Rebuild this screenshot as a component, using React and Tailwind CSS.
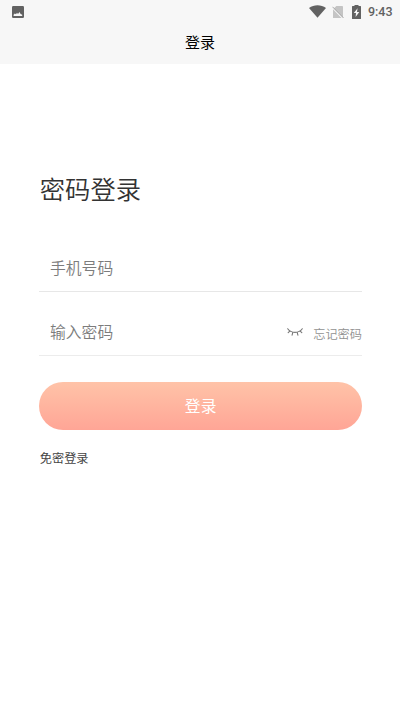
function StatusBar() {
  return (
    <div className="flex h-6 items-center pl-3 pr-[7.5px] text-[#626262]">
      <svg className="h-3 w-3" viewBox="0 0 12 12">
        <rect width="12" height="12" rx="1.2" fill="currentColor" />
        <path d="M1.6 10V8.8L2.8 7.6L4 8.2L5 6.8L6 8L7.5 6L8.6 8L10.2 8.8V10Z" fill="#f7f7f7" />
      </svg>
      <div className="ml-auto flex items-center">
        <svg className="mb-px h-[13px] w-[17px]" viewBox="0 0 17 13">
          <path d="M0 3C5 -.8 12 -.8 17 3L8.5 12.8Z" fill="currentColor" />
        </svg>
        <svg className="ml-1.5 h-3 w-3" viewBox="0 0 12 12">
          <path d="M4.3 0H10.2Q11 0 11 .8V12H1V3.3Z" fill="#c4c4c4" />
          <path d="M.3 1.8L10.7 12.4" stroke="#f7f7f7" strokeWidth="1.2" />
          <path d="M.5 .8L11.5 11.9" stroke="#aaa" strokeWidth="1" />
        </svg>
        <svg className="mb-px ml-2 h-3.5 w-[9px]" viewBox="0 0 9 14">
          <path d="M2.5 0H6.5V1H8.4Q9 1 9 1.6V13.4Q9 14 8.4 14H.6Q0 14 0 13.4V1.6Q0 1 .6 1H2.5Z" fill="currentColor" />
          <path d="M5.6 3.2L1.8 8H4L3.6 12L7.3 6.9H5Z" fill="#f7f7f7" />
        </svg>
        <span className="ml-[7px] font-[Roboto,sans-serif] text-[12.5px] font-medium leading-6">9:43</span>
      </div>
    </div>
  );
}

function ClosedEye() {
  return (
    <svg className="mt-0.5 h-2 w-4" viewBox="0 0 16 8" fill="none" stroke="#777" strokeWidth="1.1" strokeLinecap="round">
      <path d="M.7 .8C4.2 5.6 11.8 5.6 15.3 .8M2.8 3.1L1.2 4.7M5.8 4.4L5.1 7.1M10.2 4.4L10.9 7.1M13.2 3.1L14.8 4.7" />
    </svg>
  );
}

export default function App() {
  return (
    <div className="h-[711px] w-[400px] overflow-hidden bg-white font-['Noto_Sans_CJK_SC',sans-serif]">
      <header className="h-16 bg-[#f7f7f7]">
        <StatusBar />
        <h1 className="h-10 text-center text-[15px] leading-[35px] text-black">登录</h1>
      </header>
      <main className="pl-[39.3px] pr-[38px] pt-[104px]">
        <h2 className="h-10 pl-[.5px] text-[25.3px] font-[350] leading-[41px] text-[#333]">密码登录</h2>
        <div className="mt-9 flex h-12 items-center border-b border-[#e7e7e7] pl-[10.7px]">
          <span className="text-[15.8px] font-[350] text-[#7c7c7c]">手机号码</span>
        </div>
        <div className="mt-4 flex h-12 items-center border-b border-[#ececec] pl-[10.7px]">
          <span className="text-[15.8px] font-[350] text-[#7c7c7c]">输入密码</span>
          <div className="ml-auto flex items-center gap-2.5">
            <ClosedEye />
            <span className="pt-[5px] text-[12.2px] font-[350] text-[#919191]">忘记密码</span>
          </div>
        </div>
        <button className="mt-[25.5px] block h-12 w-full rounded-full bg-gradient-to-b from-[#ffc3a8] to-[#ffa596] text-[15.8px] leading-[48px] text-white">
          登录
        </button>
        <p className="mt-[18px] pl-[.5px] text-[12.2px] leading-5 text-[#444]">免密登录</p>
      </main>
    </div>
  );
}
